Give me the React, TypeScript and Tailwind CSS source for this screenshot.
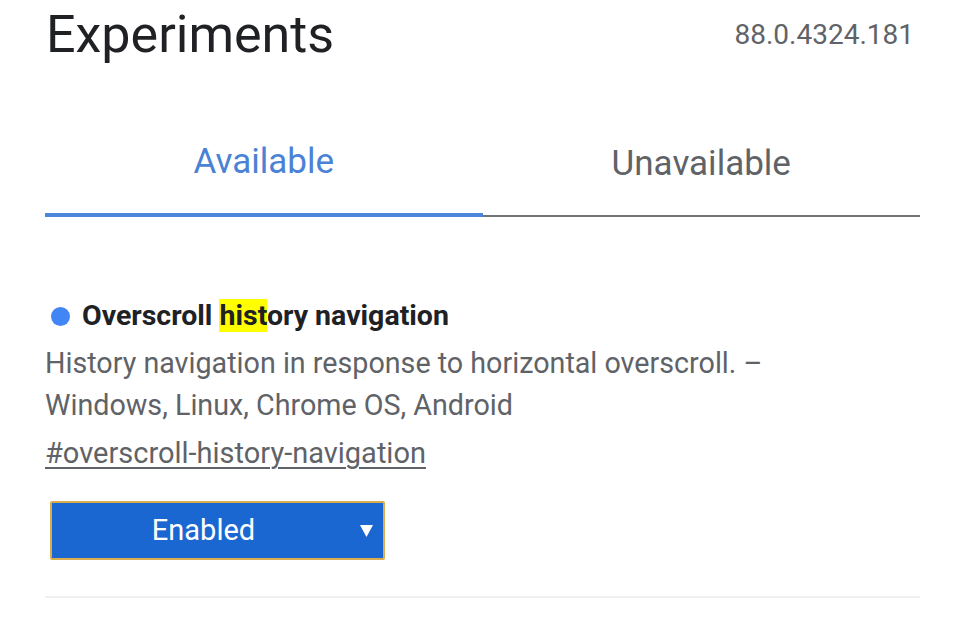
import React from "react";

export default function App() {
  return (
    <div className="w-[965px] h-[617px] overflow-hidden bg-white px-[45px] font-['Roboto','Noto_Sans',sans-serif]">
      {/* Header */}
      <div className="flex h-[130px] items-start justify-between">
        <h1 className="mt-[9px] ml-[1px] text-[52px] leading-[52px] font-normal text-[#202124]">
          Experiments
        </h1>
        <div className="mt-[21px] mr-[6px] text-[28px] leading-[28px] text-[#5f6368]">
          88.0.4324.181
        </div>
      </div>

      {/* Tabs */}
      <div className="grid grid-cols-2">
        <div className="flex h-[87px] justify-center border-b-4 border-[#4a86dc] pt-[14px]">
          <span className="text-[35px] leading-[35px] text-[#4a82d6]">Available</span>
        </div>
        <div className="flex h-[87px] justify-center border-b-2 border-[#737373] pt-[16px]">
          <span className="text-[35px] leading-[35px] text-[#5f6368]">Unavailable</span>
        </div>
      </div>

      {/* Feature */}
      <div className="pt-[81px]">
        <div className="flex items-center text-[28.5px] leading-[36px] font-bold text-[#202124]">
          <span className="ml-[6px] mr-[12px] h-[19px] w-[19px] rounded-full bg-[#4285f4]" />
          <span>
            Overscroll <span className="bg-[#ffff00]">hist</span>ory navigation
          </span>
        </div>
        <p className="mt-[8px] text-[28.7px] leading-[42px] text-[#5f6368]">
          History navigation in response to horizontal overscroll. –
          <br />
          Windows, Linux, Chrome OS, Android
        </p>
        <div className="mt-[6px] text-[29px] leading-[42px] text-[#5f6368]">
          <a className="underline decoration-[2px] underline-offset-[4px]">#overscroll-history-navigation</a>
        </div>

        <div className="ml-[5px] mt-[27px] flex h-[59px] w-[335px] items-center rounded-[2px] border-[2px] border-[#d9ad4c] bg-[#1a67d2] pr-[10px]">
          <span className="flex-1 text-center text-[29px] leading-[29px] text-white">Enabled</span>
          <svg width="13" height="12" viewBox="0 0 13 12" className="ml-[5px] shrink-0">
            <polygon points="0,0 13,0 6.5,12" fill="#ffffff" />
          </svg>
        </div>
      </div>

      <div className="mt-[36px] h-[2px] bg-[#f0f0f0]" />
    </div>
  );
}
